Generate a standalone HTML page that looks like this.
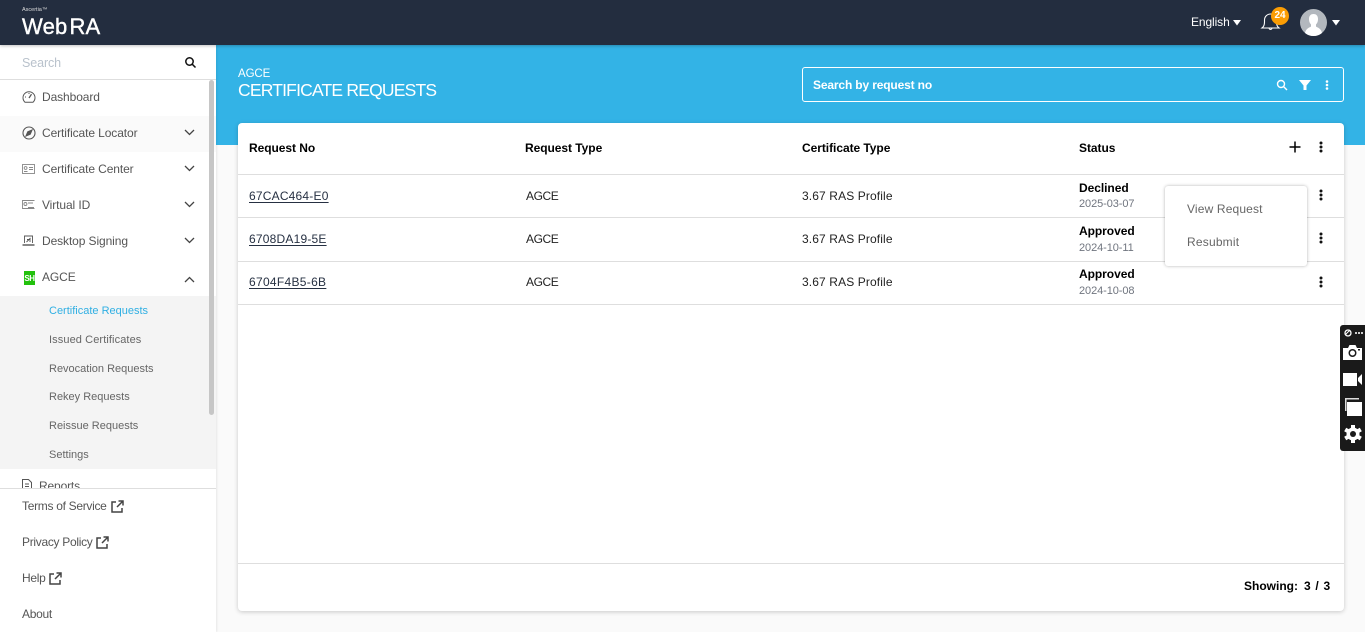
<!DOCTYPE html>
<html><head><meta charset="utf-8"><style>
html,body{margin:0;padding:0}
body{width:1365px;height:632px;overflow:hidden;position:relative;background:#fafafa;font-family:"Liberation Sans",sans-serif;color:#000}
.a,.t{position:absolute}
.t{white-space:nowrap;line-height:16px}
.m{font-size:12px;color:#555;left:42px;letter-spacing:-.1px}
.s{font-size:11px;color:#666;left:49px}
.f{font-size:12px;color:#555;left:22px;letter-spacing:-.3px}
.h{font-size:12px;font-weight:bold;color:#000;letter-spacing:-.05px}
.c{font-size:12px;color:#222;letter-spacing:.12px}
.l{font-size:12px;color:#263042;text-decoration:underline;left:249px;text-underline-offset:2px;letter-spacing:.2px}
.hr{position:absolute;left:238px;width:1106px;height:1px;background:#dedede}
.d{font-size:11px;color:#70757f;left:1079px;letter-spacing:-.08px}
svg{position:absolute;overflow:visible}
</style></head><body>

<div class="a" style="left:216px;top:45px;width:1149px;height:100px;background:#33b3e6"></div>

<!-- Sidebar -->
<div class="a" style="left:0;top:45px;width:216px;height:587px;background:#fff;box-shadow:1px 0 2px rgba(0,0,0,.08)"></div>
<div class="a" style="left:0;top:79px;width:216px;height:1px;background:#dedede"></div>
<div class="t" style="left:22px;top:55px;font-size:12.5px;color:#b9c2cc;letter-spacing:-.1px">Search</div>
<svg style="left:184px;top:56px" width="13" height="13" viewBox="0 0 13 13" fill="none" stroke="#111" stroke-width="1.5"><circle cx="5.5" cy="5.5" r="3.7"/><path d="M8.2 8.2L11.5 11.5"/></svg>

<div class="a" style="left:0;top:116px;width:216px;height:36px;background:#fafafa"></div>
<div class="a" style="left:0;top:296px;width:216px;height:173px;background:#f4f4f4"></div>
<div class="a" style="left:209px;top:80px;width:5px;height:335px;background:#c6c6c6;border-radius:3px"></div>

<svg style="left:22px;top:90px" width="14" height="14" viewBox="0 0 14 14" fill="none" stroke="#555" stroke-width="1"><path d="M3 12.2A6 6 0 1 1 11 12.2Z"/><path d="M7 8L9.5 4.2" stroke-width="1.3"/><path d="M3 7H4M7 3V4" /></svg>
<div class="t m" style="top:89px">Dashboard</div>

<svg style="left:22px;top:126px" width="14" height="14" viewBox="0 0 14 14" fill="none" stroke="#555" stroke-width="1.1"><circle cx="7" cy="7" r="6"/><path d="M10 4L8.2 8.2L4 10L5.8 5.8Z" fill="#555"/></svg>
<div class="t m" style="top:125px">Certificate Locator</div>

<svg style="left:22px;top:164px" width="13" height="10" viewBox="0 0 13 10" fill="none" stroke="#888" stroke-width=".9"><rect x=".5" y=".5" width="12" height="9"/><circle cx="3.6" cy="4" r="1.4"/><path d="M2 7.5H5.5M7 3.5H11M7 5.5H11"/></svg>
<div class="t m" style="top:161px">Certificate Center</div>

<svg style="left:22px;top:200px" width="13" height="9" viewBox="0 0 13 9" fill="none" stroke="#888" stroke-width=".9"><path d="M12.5 .5H.5V8.5H12.5"/><circle cx="3.4" cy="4" r="1.5"/><path d="M6 3H11M6 7.5H12"/></svg>
<div class="t m" style="top:197px">Virtual ID</div>

<svg style="left:22px;top:235px" width="13" height="12" viewBox="0 0 13 12" fill="none" stroke="#555" stroke-width=".9"><path d="M2.5 8V1H10.5V8"/><path d="M.5 10H12.5" stroke-width="1.4"/><path d="M4.5 7L8.5 3M5 4.5H8V7"/></svg>
<div class="t m" style="top:233px">Desktop Signing</div>

<div class="a" style="left:24px;top:271px;width:11px;height:14px;background:#22c10c;color:#fff;font-size:8px;font-weight:bold;line-height:15px;text-align:center;letter-spacing:-.4px">SH</div>
<div class="t m" style="top:269px">AGCE</div>

<svg style="left:184px;top:129px" width="11" height="7" viewBox="0 0 11 7" fill="none" stroke="#444" stroke-width="1.3"><path d="M1 1L5.5 5.5L10 1"/></svg>
<svg style="left:184px;top:165px" width="11" height="7" viewBox="0 0 11 7" fill="none" stroke="#444" stroke-width="1.3"><path d="M1 1L5.5 5.5L10 1"/></svg>
<svg style="left:184px;top:201px" width="11" height="7" viewBox="0 0 11 7" fill="none" stroke="#444" stroke-width="1.3"><path d="M1 1L5.5 5.5L10 1"/></svg>
<svg style="left:184px;top:237px" width="11" height="7" viewBox="0 0 11 7" fill="none" stroke="#444" stroke-width="1.3"><path d="M1 1L5.5 5.5L10 1"/></svg>
<svg style="left:184px;top:276px" width="11" height="7" viewBox="0 0 11 7" fill="none" stroke="#444" stroke-width="1.3"><path d="M1 6L5.5 1.5L10 6"/></svg>

<div class="t s" style="top:303px;color:#2fafe3">Certificate Requests</div>
<div class="t s" style="top:332px;letter-spacing:.1px">Issued Certificates</div>
<div class="t s" style="top:361px">Revocation Requests</div>
<div class="t s" style="top:389px">Rekey Requests</div>
<div class="t s" style="top:418px">Reissue Requests</div>
<div class="t s" style="top:447px">Settings</div>

<svg style="left:22px;top:479px" width="10" height="10" viewBox="0 0 10 10" fill="none" stroke="#555"><path d="M.5 9.500V.5H6.500L9.500 3.500V9.500M3 5H7M3 7.500H7"/></svg>
<div class="t m" style="left:39px;top:478px;letter-spacing:-.15px">Reports</div>
<div class="a" style="left:0;top:488px;width:216px;height:144px;background:#fff;border-top:1px solid #dedede;box-sizing:border-box"></div>

<div class="t f" style="top:498px">Terms of Service</div>
<div class="t f" style="top:534px">Privacy Policy</div>
<div class="t f" style="top:570px">Help</div>
<div class="t f" style="top:606px">About</div>
<svg style="left:111px;top:500px" width="13" height="13" viewBox="0 0 13 13" fill="none" stroke="#444" stroke-width="1.5"><path d="M5 2H1V12H11V8M6 7L11.500 1.500M7.500 1H12V5.500"/></svg>
<svg style="left:96px;top:536px" width="13" height="13" viewBox="0 0 13 13" fill="none" stroke="#444" stroke-width="1.5"><path d="M5 2H1V12H11V8M6 7L11.500 1.500M7.500 1H12V5.500"/></svg>
<svg style="left:49px;top:572px" width="13" height="13" viewBox="0 0 13 13" fill="none" stroke="#444" stroke-width="1.5"><path d="M5 2H1V12H11V8M6 7L11.500 1.500M7.500 1H12V5.500"/></svg>

<!-- Top bar -->
<div class="a" style="left:0;top:0;width:1365px;height:45px;background:#232d3f;box-shadow:0 1px 3px rgba(0,0,0,.25)"></div>
<div class="t" style="left:22px;top:6px;font-size:5.500px;line-height:8px;color:#ddd">Ascertia™</div>
<div class="t" style="left:22px;top:14px;font-size:22px;line-height:26px;color:#fff;letter-spacing:.2px;-webkit-text-stroke:.4px #fff">Web<span style="margin-left:2px">RA</span></div>
<div class="t" style="left:1191px;top:14px;font-size:12px;color:#fff;letter-spacing:-.1px">English</div>
<svg style="left:1233px;top:20px" width="8" height="6"><path d="M0 0H8L4 5.500Z" fill="#fff"/></svg>
<svg style="left:1261px;top:12px" width="19" height="19" viewBox="0 0 19 19" fill="none" stroke="#fff" stroke-width="1.1"><path d="M1 16H18C16 14.500 15.500 13 15.500 10V8A6 6 0 0 0 3.500 8V10C3.500 13 3 14.500 1 16Z"/><path d="M8 16.500A1.700 1.700 0 0 0 11 16.500"/></svg>
<div class="a" style="left:1271px;top:7px;width:18px;height:18px;border-radius:9px;background:#fb9d04;color:#fff;font-size:10px;font-weight:bold;line-height:17px;text-align:center">24</div>
<svg style="left:1300px;top:9px" width="27" height="27" viewBox="0 0 27 27"><circle cx="13.500" cy="13.500" r="13.500" fill="#b3b8be"/><path d="M5 24C6 19 10 18.500 11 17.500V15.500C9.500 14 9 12 9 10C9 6.500 11 5 13.500 5S18 6.500 18 10C18 12 17.500 14 16 15.500V17.500C17 18.500 21 19 22 24A13.500 13.500 0 0 1 5 24Z" fill="#fff"/></svg>
<svg style="left:1332px;top:20px" width="8" height="6"><path d="M0 0H8L4 5.500Z" fill="#fff"/></svg>

<!-- Banner -->
<div class="t" style="left:238px;top:66px;font-size:11.500px;color:#fff;letter-spacing:-.1px">AGCE</div>
<div class="t" style="left:238px;top:80px;font-size:17.500px;line-height:20px;color:#fff;letter-spacing:-.8px">CERTIFICATE REQUESTS</div>
<div class="a" style="left:802px;top:67px;width:542px;height:35px;border:1px solid #fff;border-radius:3px;box-sizing:border-box"></div>
<div class="t" style="left:813px;top:77px;font-size:12px;font-weight:bold;color:#fff;letter-spacing:-.15px">Search by request no</div>
<svg style="left:1276px;top:79px" width="12" height="12" viewBox="0 0 12 12" fill="none" stroke="#fff" stroke-width="1.400"><circle cx="5" cy="5" r="3.500"/><path d="M7.500 7.500L11 11"/></svg>
<svg style="left:1299px;top:80px" width="12" height="10"><path d="M0 0H12L7.500 5.500V10H4.500V5.500Z" fill="#fff"/></svg>
<svg style="left:1325px;top:80px" width="4" height="11" fill="#fff"><circle cx="2" cy="1.500" r="1.300"/><circle cx="2" cy="5" r="1.300"/><circle cx="2" cy="8.500" r="1.300"/></svg>

<!-- Card -->
<div class="a" style="left:238px;top:123px;width:1106px;height:488px;background:#fff;border-radius:4px;box-shadow:0 1px 5px rgba(0,0,0,.2)"></div>
<div class="t h" style="left:249px;top:140px">Request No</div>
<div class="t h" style="left:525px;top:140px">Request Type</div>
<div class="t h" style="left:802px;top:140px">Certificate Type</div>
<div class="t h" style="left:1079px;top:140px">Status</div>
<svg style="left:1289px;top:141px" width="12" height="12" stroke="#000" stroke-width="1.500"><path d="M6 .5V11.500M.5 6H11.500"/></svg>
<svg style="left:1319px;top:141px" width="4" height="12" fill="#111"><circle cx="2" cy="2" r="1.500"/><circle cx="2" cy="6" r="1.500"/><circle cx="2" cy="10" r="1.500"/></svg>
<div class="hr" style="top:174px"></div>
<div class="hr" style="top:217px"></div>
<div class="hr" style="top:261px"></div>
<div class="hr" style="top:304px"></div>
<div class="hr" style="top:563px"></div>

<div class="t l" style="top:188px">67CAC464-E0</div>
<div class="t c" style="left:526px;top:188px;letter-spacing:-.4px">AGCE</div>
<div class="t c" style="left:802px;top:188px">3.67 RAS Profile</div>
<div class="t h" style="left:1079px;top:180px">Declined</div>
<div class="t d" style="top:196px">2025-03-07</div>

<div class="t l" style="top:231px">6708DA19-5E</div>
<div class="t c" style="left:526px;top:231px;letter-spacing:-.4px">AGCE</div>
<div class="t c" style="left:802px;top:231px">3.67 RAS Profile</div>
<div class="t h" style="left:1079px;top:223px">Approved</div>
<div class="t d" style="top:240px">2024-10-11</div>

<div class="t l" style="top:274px;letter-spacing:.3px">6704F4B5-6B</div>
<div class="t c" style="left:526px;top:274px;letter-spacing:-.4px">AGCE</div>
<div class="t c" style="left:802px;top:274px">3.67 RAS Profile</div>
<div class="t h" style="left:1079px;top:266px">Approved</div>
<div class="t d" style="top:283px">2024-10-08</div>

<svg style="left:1319px;top:189px" width="4" height="12" fill="#111"><circle cx="2" cy="2" r="1.500"/><circle cx="2" cy="6" r="1.500"/><circle cx="2" cy="10" r="1.500"/></svg>
<svg style="left:1319px;top:232px" width="4" height="12" fill="#111"><circle cx="2" cy="2" r="1.500"/><circle cx="2" cy="6" r="1.500"/><circle cx="2" cy="10" r="1.500"/></svg>
<svg style="left:1319px;top:276px" width="4" height="12" fill="#111"><circle cx="2" cy="2" r="1.500"/><circle cx="2" cy="6" r="1.500"/><circle cx="2" cy="10" r="1.500"/></svg>

<div class="a" style="left:1165px;top:186px;width:142px;height:80px;background:#fff;border-radius:3px;box-shadow:0 0 3px rgba(0,0,0,.3)"></div>
<div class="t" style="left:1187px;top:201px;font-size:12px;color:#666;letter-spacing:.15px">View Request</div>
<div class="t" style="left:1187px;top:234px;font-size:12px;color:#666;letter-spacing:.2px">Resubmit</div>

<div class="t" style="left:1244px;top:578px;font-size:12px;font-weight:bold">Showing:</div>
<div class="t" style="left:1304px;top:578px;font-size:12px;font-weight:bold;letter-spacing:.7px">3 / 3</div>

<!-- Floating toolbar -->
<div class="a" style="left:1340px;top:325px;width:25px;height:126px;background:#1a1a1a;border-radius:3px 0 0 3px"></div>
<svg style="left:1340px;top:325px" width="25" height="126" viewBox="0 0 25 126">
<circle cx="8" cy="8" r="3" fill="none" stroke="#fff" stroke-width="1.300"/><path d="M5 10L10 5" stroke="#fff"/>
<path d="M15 7H17V9H15ZM18 7H20V9H18ZM21 7H23V9H21Z" fill="#ccc"/>
<path d="M3 23H8L9.500 20H15.500L17 23H22V35H3Z" fill="#fff"/><circle cx="12.500" cy="28" r="4" fill="#1a1a1a"/><circle cx="12.500" cy="28" r="2.500" fill="#fff"/><rect x="18" y="24" width="2" height="1.500" fill="#1a1a1a"/>
<path d="M3 48H17V61H3ZM18 53L22 49V60L18 56Z" fill="#fff"/>
<path d="M5 86V73H19V74.500H6.500V86Z" fill="#ddd"/><path d="M7 77H22V91H7Z" fill="#fff"/>
<g transform="translate(13 109)"><circle r="6.500" fill="#fff"/><circle r="3" fill="#1a1a1a"/><g fill="#fff"><rect x="-2" y="-9" width="4" height="4"/><rect x="-2" y="5" width="4" height="4"/><rect x="-2" y="-9" width="4" height="4" transform="rotate(60)"/><rect x="-2" y="5" width="4" height="4" transform="rotate(60)"/><rect x="-2" y="-9" width="4" height="4" transform="rotate(120)"/><rect x="-2" y="5" width="4" height="4" transform="rotate(120)"/></g></g>
</svg>
</body></html>
